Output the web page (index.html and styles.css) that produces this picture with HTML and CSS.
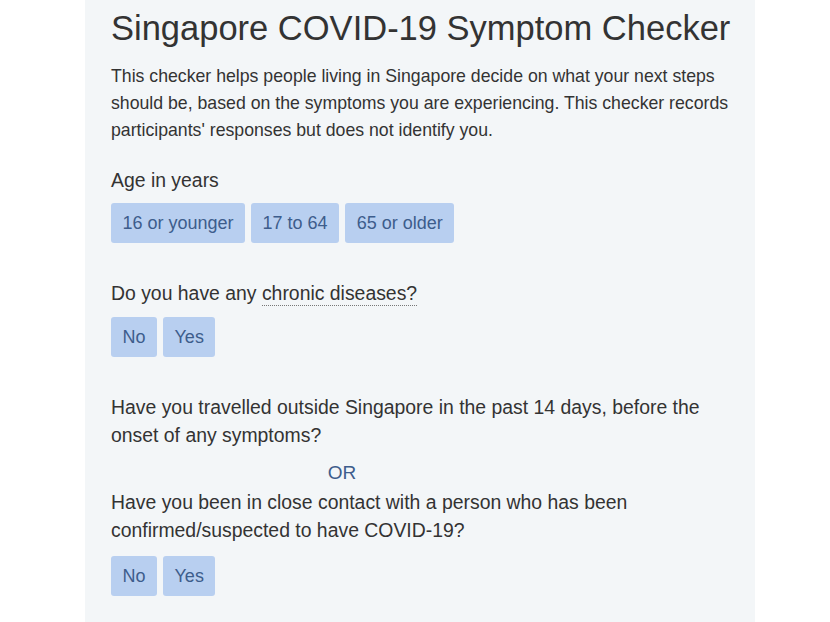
FILE: index.html
```html
<!DOCTYPE html>
<html lang="en">
<head>
  <meta charset="UTF-8">
  <title>Singapore COVID-19 Symptom Checker</title>
  <link rel="stylesheet" href="styles.css">
</head>
<body>
  <main class="checker">
    <h1>Singapore COVID-19 Symptom Checker</h1>
    <p class="intro">This checker helps people living in Singapore decide on what your next steps should be, based on the symptoms you are experiencing. This checker records participants' responses but does not identify you.</p>

    <!-- Age -->
    <section class="question first">
      <p class="label">Age in years</p>
      <div class="choices">
        <button>16 or younger</button>
        <button>17 to 64</button>
        <button>65 or older</button>
      </div>
    </section>

    <!-- Chronic diseases -->
    <section class="question">
      <p class="label">Do you have any <span class="hint">chronic diseases?</span></p>
      <div class="choices">
        <button>No</button>
        <button>Yes</button>
      </div>
    </section>

    <!-- Travel / contact -->
    <section class="question contact">
      <p class="label">Have you travelled outside Singapore in the past 14 days, before the onset of any symptoms?</p>
      <div class="or">OR</div>
      <p class="label">Have you been in close contact with a person who has been confirmed/suspected to have COVID-19?</p>
      <div class="choices">
        <button>No</button>
        <button>Yes</button>
      </div>
    </section>
  </main>
</body>
</html>
```

FILE: styles.css
```css
body {
  font-family: 'Liberation Sans', Arial, Helvetica, sans-serif;
  background-color: #ffffff;
  color: #333;
  margin: 0;
}

.checker {
  width: 670px;
  margin-left: 85px;
  min-height: 622px;
  background-color: #f3f6f8;
  padding: 7px 26px 0 26px;
  box-sizing: border-box;
}

h1 {
  font-size: 34.5px;
  font-weight: normal;
  line-height: 42px;
  margin: 0;
  white-space: nowrap;
  color: #333;
}

.intro {
  font-size: 17.7px;
  line-height: 27px;
  margin: 14px 0 0 0;
}

.question {
  margin-top: 36px;
}

.question.first {
  margin-top: 22px;
}

.label {
  font-size: 19.4px;
  line-height: 28px;
  margin: 0;
}

/* dotted hint under a term */
.hint {
  border-bottom: 1px dotted #777;
  padding-bottom: 1px;
}

.or {
  width: 462px;
  text-align: center;
  font-size: 19px;
  line-height: 28px;
  color: #3d5d8c;
  margin: 10px 0 1px 0;
}

.choices {
  display: flex;
  gap: 6px;
  margin-top: 10px;
}

.question.first .choices {
  margin-top: 9px;
}

.question.contact .choices {
  margin-top: 12px;
}

.choices button {
  font-family: inherit;
  font-size: 18px;
  height: 40px;
  padding: 0 11.5px;
  background-color: #b8cff0;
  color: #3d5d8c;
  border: none;
  border-radius: 3px;
  cursor: pointer;
}

.choices button:hover {
  background-color: #a5c2ea;
}
```
